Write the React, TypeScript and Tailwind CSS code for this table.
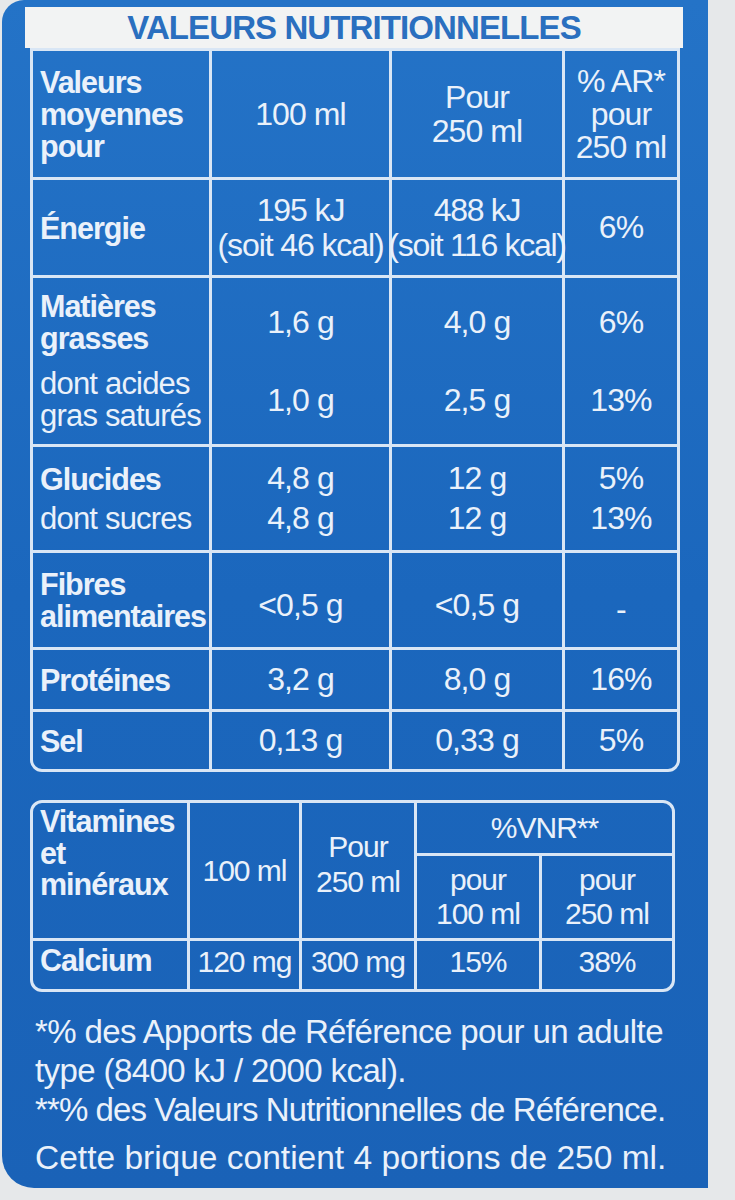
import React from "react";

type CellProps = {
  children?: React.ReactNode;
  right?: boolean;
  bottom?: boolean;
  className?: string;
};

// one box of the grid: white rule on its right and bottom unless it sits on the edge
const Cell: React.FC<CellProps> = ({ children, right = true, bottom = true, className = "" }) => (
  <div
    className={`flex flex-col justify-center border-[#d9e6f5] ${right ? "border-r-[3px]" : ""} ${
      bottom ? "border-b-[3px]" : ""
    } ${className}`}
  >
    {children}
  </div>
);

const Label: React.FC<{ children: React.ReactNode; bold?: boolean }> = ({ children, bold = true }) => (
  <div
    className={`${
      bold ? "font-bold text-[30.5px] tracking-[-1px]" : "font-normal text-[31px] tracking-[-0.8px]"
    } leading-[32px] whitespace-nowrap`}
  >
    {children}
  </div>
);

const Val: React.FC<{ children: React.ReactNode; className?: string }> = ({ children, className = "" }) => (
  <div className={`text-[32px] tracking-[-0.9px] leading-[33px] whitespace-nowrap ${className}`}>{children}</div>
);

const LEFT = "items-start pl-[7px]";
const MID = "items-center text-center";

const MainTable: React.FC = () => (
  <div className="grid grid-cols-[179px_180px_173px_112px] grid-rows-[129px_98px_169px_106px_97px_62px_57px] border-[3px] border-[#d9e6f5] rounded-b-[12px] ml-[5px] w-[650px]">
    {/* header */}
    <Cell className={LEFT}>
      <Label>
        Valeurs
        <br />
        moyennes
        <br />
        pour
      </Label>
    </Cell>
    <Cell className={MID}>
      <Val>100 ml</Val>
    </Cell>
    <Cell className={MID}>
      <Val className="leading-[34px]">
        Pour
        <br />
        250 ml
      </Val>
    </Cell>
    <Cell right={false} className={MID}>
      <Val className="text-[31px] leading-[32px]">
        % AR*
        <br />
        pour
        <br />
        250 ml
      </Val>
    </Cell>

    {/* energie */}
    <Cell className={LEFT}>
      <Label>Énergie</Label>
    </Cell>
    <Cell className={MID}>
      <Val className="text-[31px] leading-[35px] tracking-[-1.1px]">
        195 kJ
        <br />
        (soit 46 kcal)
      </Val>
    </Cell>
    <Cell className={MID}>
      <Val className="text-[31px] leading-[35px] tracking-[-1.3px]">
        488 kJ
        <br />
        (soit 116 kcal)
      </Val>
    </Cell>
    <Cell right={false} className={MID}>
      <Val>6%</Val>
    </Cell>

    {/* matieres grasses */}
    <Cell className={`${LEFT} gap-[14px]`}>
      <div className="h-[64px] flex flex-col justify-center">
        <Label>
          Matières
          <br />
          grasses
        </Label>
      </div>
      <div className="h-[64px] flex flex-col justify-center">
        <Label bold={false}>
          dont acides
          <br />
          gras saturés
        </Label>
      </div>
    </Cell>
    {[
      ["1,6 g", "1,0 g"],
      ["4,0 g", "2,5 g"],
      ["6%", "13%"],
    ].map(([a, b], i) => (
      <Cell key={i} right={i < 2} className={`${MID} gap-[14px]`}>
        <div className="h-[64px] flex items-center">
          <Val>{a}</Val>
        </div>
        <div className="h-[64px] flex items-center">
          <Val>{b}</Val>
        </div>
      </Cell>
    ))}

    {/* glucides */}
    <Cell className={`${LEFT} gap-[6px]`}>
      <div className="h-[34px] flex items-center">
        <Label>Glucides</Label>
      </div>
      <div className="h-[34px] flex items-center">
        <Label bold={false}>dont sucres</Label>
      </div>
    </Cell>
    {[
      ["4,8 g", "4,8 g"],
      ["12 g", "12 g"],
      ["5%", "13%"],
    ].map(([a, b], i) => (
      <Cell key={i} right={i < 2} className={`${MID} gap-[6px]`}>
        <div className="h-[34px] flex items-center">
          <Val>{a}</Val>
        </div>
        <div className="h-[34px] flex items-center">
          <Val>{b}</Val>
        </div>
      </Cell>
    ))}

    {/* fibres */}
    <Cell className={LEFT}>
      <Label>
        Fibres
        <br />
        alimentaires
      </Label>
    </Cell>
    <Cell className={`${MID} pt-[10px]`}>
      <Val>&lt;0,5 g</Val>
    </Cell>
    <Cell className={`${MID} pt-[10px]`}>
      <Val>&lt;0,5 g</Val>
    </Cell>
    <Cell right={false} className={`${MID} pt-[18px]`}>
      <Val>-</Val>
    </Cell>

    {/* proteines */}
    <Cell className={LEFT}>
      <Label>Protéines</Label>
    </Cell>
    <Cell className={MID}>
      <Val>3,2 g</Val>
    </Cell>
    <Cell className={MID}>
      <Val>8,0 g</Val>
    </Cell>
    <Cell right={false} className={MID}>
      <Val>16%</Val>
    </Cell>

    {/* sel */}
    <Cell bottom={false} className={LEFT}>
      <Label>Sel</Label>
    </Cell>
    <Cell bottom={false} className={MID}>
      <Val>0,13 g</Val>
    </Cell>
    <Cell bottom={false} className={MID}>
      <Val>0,33 g</Val>
    </Cell>
    <Cell bottom={false} right={false} className={MID}>
      <Val>5%</Val>
    </Cell>
  </div>
);

const Small: React.FC<{ children: React.ReactNode; className?: string }> = ({ children, className = "" }) => (
  <div className={`text-[30px] leading-[34px] whitespace-nowrap tracking-[-1px] ${className}`}>{children}</div>
);

const VitaminTable: React.FC = () => (
  <div className="grid grid-cols-[157px_112px_115px_125px_130px] grid-rows-[53px_85px_48px] border-[3px] border-[#d9e6f5] rounded-[12px] ml-[5px] mt-[28px] w-[645px]">
    <Cell className={`${LEFT} row-span-2 justify-start pt-[3px]`}>
      <div className="font-bold text-[30.5px] tracking-[-1px] leading-[31.5px] whitespace-nowrap">
        Vitamines
        <br />
        et
        <br />
        minéraux
      </div>
    </Cell>
    <Cell className={`${MID} row-span-2`}>
      <Small>100 ml</Small>
    </Cell>
    <Cell className={`${MID} row-span-2 pb-[14px]`}>
      <Small className="leading-[35px]">
        Pour
        <br />
        250 ml
      </Small>
    </Cell>
    <Cell right={false} className={`${MID} col-span-2`}>
      <Small>%VNR**</Small>
    </Cell>
    <Cell className={MID}>
      <Small className="leading-[33px]">
        pour
        <br />
        100 ml
      </Small>
    </Cell>
    <Cell right={false} className={MID}>
      <Small className="leading-[33px]">
        pour
        <br />
        250 ml
      </Small>
    </Cell>

    <Cell bottom={false} className={`${LEFT} pb-[10px]`}>
      <div className="font-bold text-[30.5px] tracking-[-1px] leading-[32px]">Calcium</div>
    </Cell>
    <Cell bottom={false} className={`${MID} pb-[6px]`}>
      <Small>120 mg</Small>
    </Cell>
    <Cell bottom={false} className={`${MID} pb-[6px]`}>
      <Small>300 mg</Small>
    </Cell>
    <Cell bottom={false} className={`${MID} pb-[6px]`}>
      <Small>15%</Small>
    </Cell>
    <Cell bottom={false} right={false} className={`${MID} pb-[6px]`}>
      <Small>38%</Small>
    </Cell>
  </div>
);

const App: React.FC = () => {
  return (
    <div className="w-[735px] h-[1200px] overflow-hidden bg-[#e6e8ea] font-['Liberation_Sans',Arial,sans-serif] text-[#eaf1fa]">
      <div className="ml-[2px] w-[706px] h-[1188px] rounded-tl-[22px] rounded-bl-[32px] bg-gradient-to-b from-[#2473c7] via-[#1b67bd] to-[#1a62b7] pl-[23px] pr-[25px] pt-[7px]">
        <div className="h-[41px] bg-[#f2f3f3] flex items-center justify-center">
          <h1 className="font-bold text-[33px] tracking-[-0.9px] leading-none text-[#2a6fbf] whitespace-nowrap">
            VALEURS NUTRITIONNELLES
          </h1>
        </div>

        <MainTable />
        <VitaminTable />

        <div className="pl-[10px] mt-[20px] text-[33px] tracking-[-0.6px] leading-[39px] whitespace-nowrap">
          <p>*% des Apports de Référence pour un adulte</p>
          <p>type (8400 kJ / 2000 kcal).</p>
          <p className="tracking-[-0.9px]">**% des Valeurs Nutritionnelles de Référence.</p>
          <p className="mt-[9px] text-[33.5px] tracking-normal">Cette brique contient 4 portions de 250 ml.</p>
        </div>
      </div>
    </div>
  );
};

export default App;
